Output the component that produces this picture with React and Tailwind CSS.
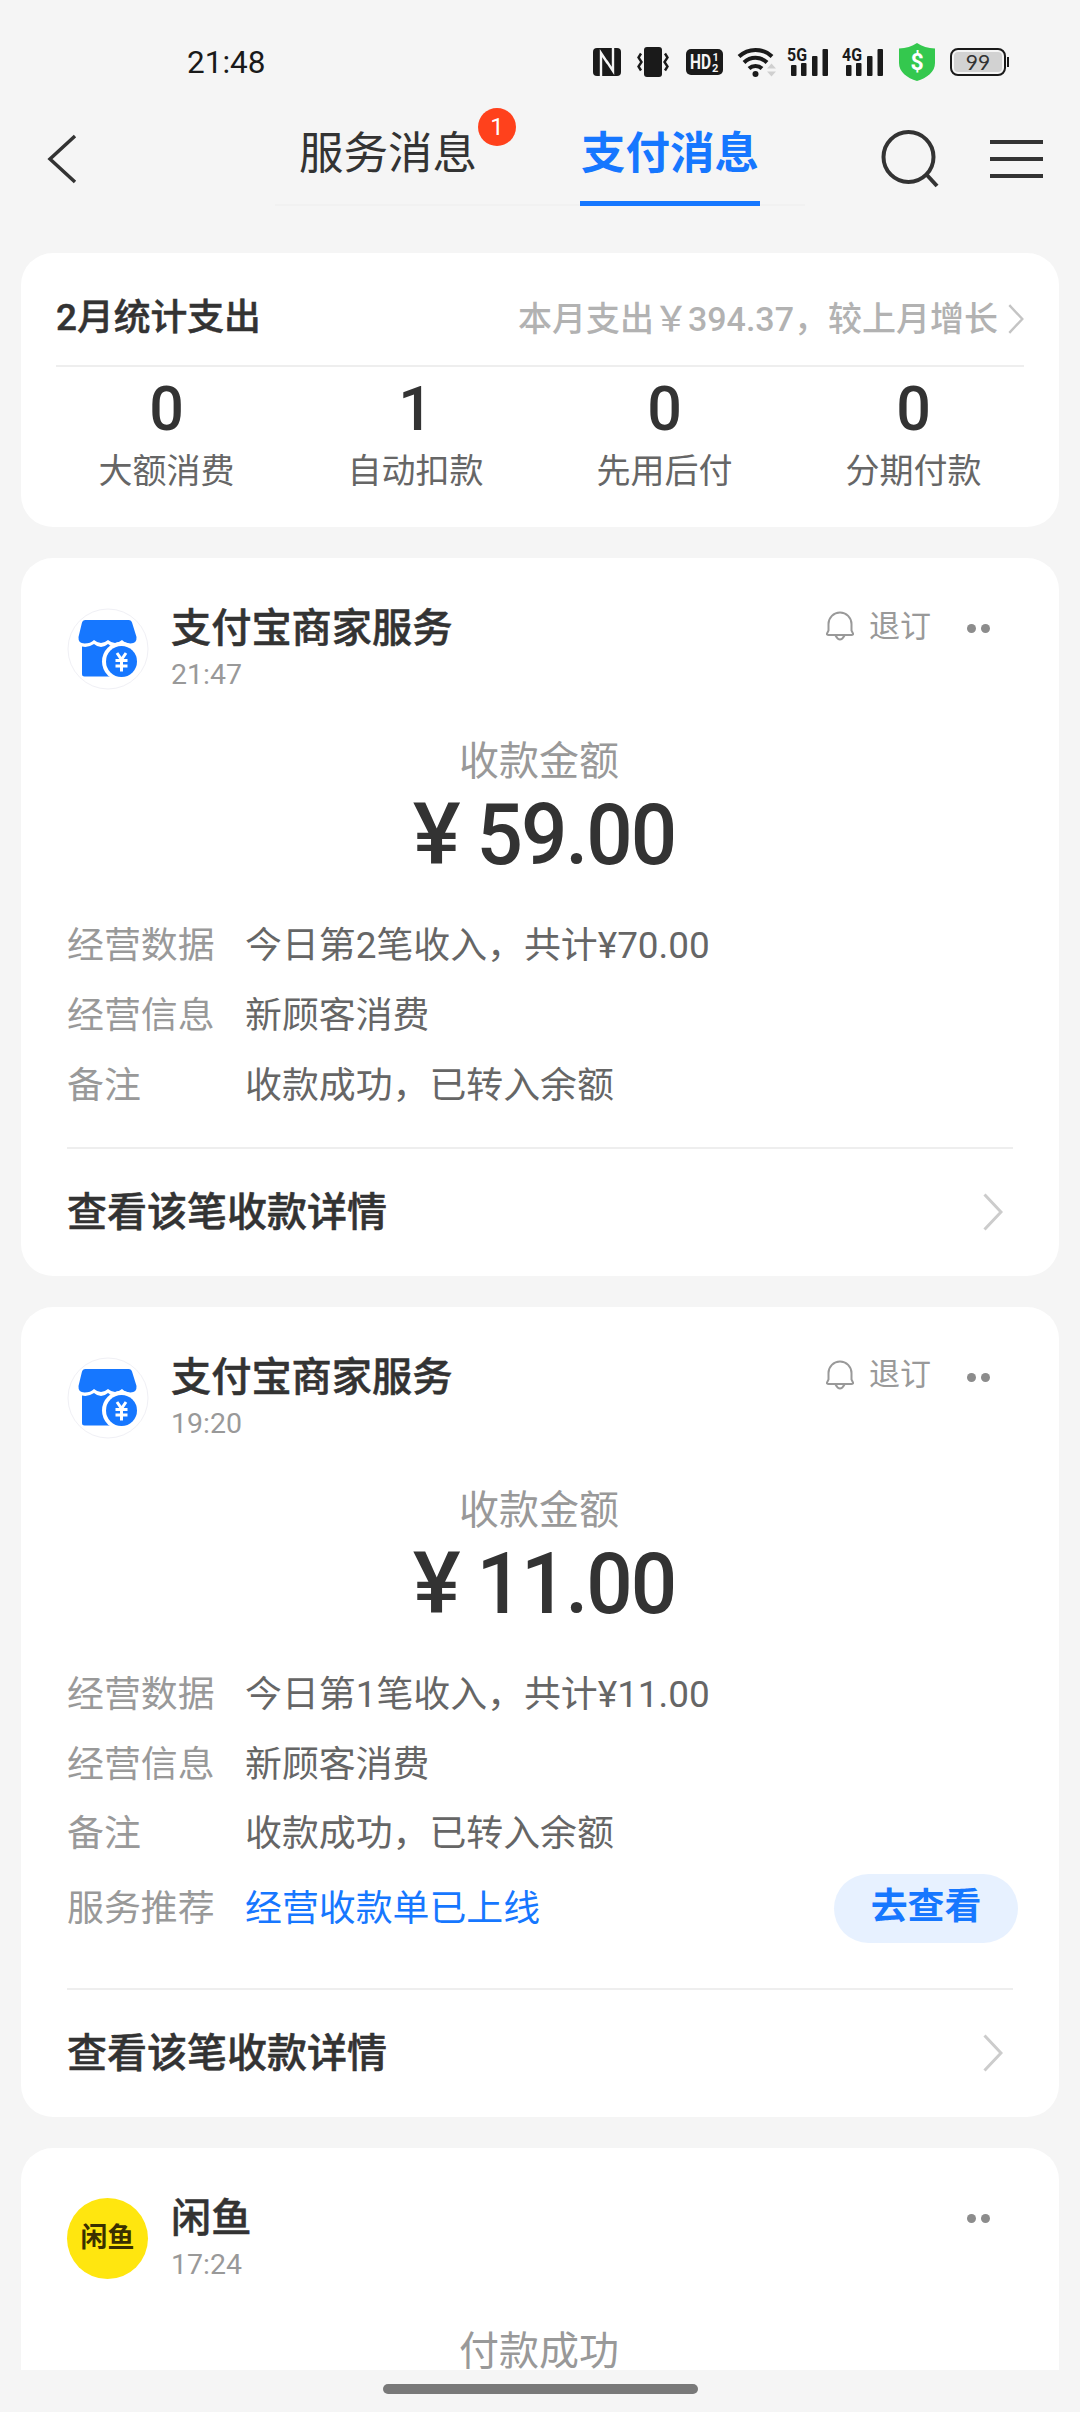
const stats = [
  { value: "0", label: "大额消费" },
  { value: "1", label: "自动扣款" },
  { value: "0", label: "先用后付" },
  { value: "0", label: "分期付款" },
];

const bills = [
  {
    time: "21:47",
    amount: "59.00",
    rows: [
      ["经营数据", "今日第2笔收入，共计¥70.00"],
      ["经营信息", "新顾客消费"],
      ["备注", "收款成功，已转入余额"],
    ],
  },
  {
    time: "19:20",
    amount: "11.00",
    rows: [
      ["经营数据", "今日第1笔收入，共计¥11.00"],
      ["经营信息", "新顾客消费"],
      ["备注", "收款成功，已转入余额"],
    ],
    promo: "经营收款单已上线",
  },
];

const Signal = ({ label }) => (
  <svg width="42" height="40" viewBox="0 -4 42 40" fill="#1a1a1a">
    <rect x="4" y="19" width="5.5" height="11" rx="1" />
    <rect x="14" y="17" width="5.5" height="13" rx="1" />
    <rect x="25" y="10" width="5.5" height="20" rx="1" />
    <rect x="35.5" y="3" width="5.5" height="27" rx="1" />
    <text x="0" y="15" fontSize="19" fontWeight="700" textLength="20" lengthAdjust="spacingAndGlyphs">
      {label}
    </text>
  </svg>
);

const StatusBar = () => (
  <div className="flex h-[124px] items-center pl-[187px] pr-[71px] text-[#1a1a1a]">
    <span className="pt-px text-[31.5px] leading-none">21:48</span>
    <div className="ml-auto flex items-center">
      {/* NFC */}
      <svg width="28" height="28" viewBox="0 0 28 28">
        <rect width="28" height="28" rx="4" fill="#1a1a1a" />
        <path d="M8 28V5l6.500 10M20 0v23l-6.500-10" fill="none" stroke="#f5f5f5" strokeWidth="2.400" />
      </svg>
      {/* vibrate */}
      <svg className="ml-4" width="32" height="30" viewBox="0 0 32 30">
        <rect x="7" y="0" width="18" height="30" rx="3" fill="#1a1a1a" />
        <path d="M4 6.500L1.500 10.500l3 4.500-3 4.500 2.500 4M28 6.500l2.500 4-3 4.500 3 4.500-2.500 4" fill="none" stroke="#1a1a1a" strokeWidth="2.400" />
      </svg>
      <svg className="ml-[17px]" width="37" height="26" viewBox="0 0 37 26">
        <rect width="37" height="26" rx="5" fill="#1a1a1a" />
        <text x="4" y="20" fontSize="20" fontWeight="700" fill="#f5f5f5" textLength="21" lengthAdjust="spacingAndGlyphs">HD</text>
        <text x="26.5" y="12" fontSize="11" fontWeight="700" fill="#f5f5f5">1</text>
        <text x="26" y="23" fontSize="11" fontWeight="700" fill="#f5f5f5">2</text>
      </svg>
      {/* wifi */}
      <svg className="ml-[14px]" width="40" height="32" viewBox="0 0 40 32">
        <g fill="none" stroke="#1a1a1a" strokeWidth="4">
          <path d="M2 10.500a24 24 0 0 1 33 0" />
          <path d="M7 16.500a16.500 16.500 0 0 1 23 0" />
          <path d="M12 22.500a9.500 9.500 0 0 1 13 0" />
        </g>
        <circle cx="18.500" cy="28" r="3" fill="#1a1a1a" />
        <path d="M30 22.500l4.500-5 4.500 5zM30 25.500l4.500 5 4.500-5z" fill="#d0d0d0" />
      </svg>
      <div className="ml-[10px]"><Signal label="5G" /></div>
      <div className="ml-[13px]"><Signal label="4G" /></div>
      <svg className="ml-[15px]" width="36" height="38" viewBox="0 0 36 38">
        <path d="M18 0c5 3.500 11 5 18 5.500V20c0 9-8 15-18 18C8 35 0 29 0 20V5.500C7 5 13 3.500 18 0z" fill="#34c84e" />
        <text x="18" y="26.500" fontSize="23" fontWeight="700" fill="#fff" textAnchor="middle">$</text>
      </svg>
      <svg className="ml-[15px]" width="59" height="28" viewBox="0 0 59 28">
        <rect x="1" y="1" width="54" height="26" rx="7" fill="#f5f5f5" stroke="#1a1a1a" strokeWidth="2" />
        <rect x="4" y="4" width="48" height="20" rx="4" fill="#d2d2d2" />
        <rect x="57" y="9" width="2" height="10" fill="#1a1a1a" />
        <text x="28" y="21.500" fontSize="21" fill="#333" textAnchor="middle" className="font-['Lato']">99</text>
      </svg>
    </div>
  </div>
);

const Header = () => (
  <div className="flex h-[129px] items-start">
    <svg className="ml-[46px] mt-[10px]" width="32" height="50" viewBox="0 0 32 50">
      <path d="M29 2L4 25l25 23" fill="none" stroke="#333" strokeWidth="3.500" />
    </svg>
    <div className="ml-[197px] flex h-[82px] w-[530px] border-b-2 border-[#f1f1f1] pl-6">
      <div className="relative h-[82px] text-[44.5px] leading-[61px] text-[#333]">
        服务消息
        <span className="absolute -top-[16px] left-[179px] flex size-[38px] items-center justify-center rounded-full bg-[#ff411c] text-[24px] leading-none text-white">
          1
        </span>
      </div>
      <div className="ml-[103px] h-[82px] w-[180px] border-b-[5px] border-[#1677ff] text-center text-[44.5px] font-bold leading-[61px] text-[#1677ff]">
        支付消息
      </div>
    </div>
    <svg className="ml-[73px] mt-[5px]" width="62" height="62" viewBox="0 0 62 62">
      <circle cx="30.500" cy="28" r="25" fill="none" stroke="#333" strokeWidth="4" />
      <path d="M48 45l11 12" stroke="#333" strokeWidth="4" />
    </svg>
    <div className="ml-[50px] mt-[16px] flex w-[53px] flex-col gap-[13px]">
      <span className="h-1 bg-[#333]" />
      <span className="h-1 bg-[#333]" />
      <span className="h-1 bg-[#333]" />
    </div>
  </div>
);

const Chevron = ({ className, color }) => (
  <svg className={className} viewBox="0 0 20 38" fill="none" stroke={color} strokeWidth="3">
    <path d="M1.500 1.500L18 19 1.500 36.500" />
  </svg>
);

const StatsCard = () => (
  <div className="h-[274px] shrink-0 rounded-[32px] bg-white px-[35px]">
    <div className="flex h-[114px] items-center justify-between border-b-2 border-[#eee] pt-[19px]">
      <span className="text-[36.8px] font-medium leading-none text-[#333] [-webkit-text-stroke:0.5px]">2月统计支出</span>
      <div className="flex items-center text-[34px] font-medium leading-none text-[#b2b2b2]">
        本月支出￥394.37，较上月增长
        <Chevron className="ml-[10px] h-[30px] w-4" color="#c4c4c4" />
      </div>
    </div>
    <div className="-mx-[14px] grid grid-cols-4 text-center">
      {stats.map((s) => (
        <div key={s.label}>
          <div className="mt-[10px] h-[64px] text-[61px] font-medium leading-[64px] text-[#333]">{s.value}</div>
          <div className="mt-[8px] text-[34px] leading-[44px] text-[#666]">{s.label}</div>
        </div>
      ))}
    </div>
  </div>
);

const ShopAvatar = () => (
  <svg className="mt-px" width="82" height="82" viewBox="0 0 82 82">
    <circle cx="41" cy="41" r="40" fill="#fff" stroke="#f0f0f5" />
    <path
      d="M18 12h44q2.500 0 3 2.500L69.500 29Q70 35.500 63.500 35.500 58.500 35.500 55 32 48 38 41 32 34 38 27 32 23.500 35.500 17.500 35.500 11 35.500 11.500 29L15 14.500Q15.500 12 18 12z"
      fill="#1677ff"
    />
    <path d="M15 38.500Q21 40 27 36 34 42 41 36 48 42 55 36V68.500H17.500Q15 68.500 15 66z" fill="#1677ff" />
    <circle cx="54.500" cy="53.500" r="19.500" fill="#fff" />
    <circle cx="54.500" cy="53.500" r="15.500" fill="#1677ff" />
    <path d="M50 45l4.500 6.500L59 45M54.500 51v12.500M48.500 52.500h12M48.500 58h12" fill="none" stroke="#fff" strokeWidth="3" />
  </svg>
);

const FishAvatar = () => (
  <div className="mr-px mt-px flex size-[81px] items-center justify-center rounded-full bg-[#ffe60f] text-[27px] font-bold leading-none text-[#3a3000]">
    闲鱼
  </div>
);

const Bell = () => (
  <svg width="28" height="30" viewBox="0 0 28 30" fill="none" stroke="#999" strokeWidth="2">
    <path d="M2.500 13a11.500 11.500 0 0 1 23 0v6.500l1.500 3q.3 1.500-1.500 1.500h-23q-1.800 0-1.500-1.500l1.500-3z" />
    <path d="M9.500 24.500q4.500 8 9 0" />
  </svg>
);

const CardHeader = ({ avatar, title, time, canUnsubscribe }) => (
  <div className="flex h-[160px] pl-[46px] pr-[69px] pt-[49px]">
    {avatar}
    <div className="ml-[22px]">
      <div className="-mt-px h-[46px] text-[40.2px] font-medium leading-[46px] text-[#333] [-webkit-text-stroke:0.5px]">
        {title}
      </div>
      <div className="mt-[6px] text-[28.5px] leading-[34px] text-[#999]">{time}</div>
    </div>
    <div className="ml-auto flex h-10 items-center text-[31px] leading-none text-[#999]">
      {canUnsubscribe && (
        <div className="flex items-center pb-[2px]">
          <Bell />
          <span className="ml-[15px]">退订</span>
        </div>
      )}
      <span className="ml-9 mt-[3px] flex gap-[5px]">
        <i className="size-[9px] rounded-full bg-[#8c8c8c]" />
        <i className="size-[9px] rounded-full bg-[#8c8c8c]" />
      </span>
    </div>
  </div>
);

const BillCard = ({ time, amount, rows, promo }) => (
  <div className="shrink-0 rounded-[32px] bg-white">
    <CardHeader avatar={<ShopAvatar />} title="支付宝商家服务" time={time} canUnsubscribe />
    <div className="mt-5 pr-[2px] text-center text-[40px] leading-[48px] text-[#999]">收款金额</div>
    <div className="mt-[6px] flex h-[86px] justify-center pl-[10px] text-[86px] font-medium leading-[86px] tracking-[-2px] text-[#333]">
      <span className="mr-[7px] origin-right scale-x-[1.05]">¥</span>
      <span className="origin-right scale-x-[0.95]">{amount}</span>
    </div>
    <div className="mt-[34px] px-[46px] text-[36.9px]">
      {rows.map(([label, value]) => (
        <div key={label} className="flex h-[69.6px] items-center leading-none">
          <span className="w-[178px] text-[#999]">{label}</span>
          <span className="text-[#666]">{value}</span>
        </div>
      ))}
      {promo && (
        <div className="-mr-[5px] flex h-[92px] items-start pt-[4px] leading-none">
          <span className="flex h-[72px] w-[178px] items-center text-[#999]">服务推荐</span>
          <span className="flex h-[72px] items-center text-[#1677ff]">{promo}</span>
          <button className="ml-auto h-[69px] w-[184px] rounded-full bg-[#e7f1ff] pb-[2px] font-bold text-[#1677ff]">
            去查看
          </button>
        </div>
      )}
    </div>
    <div className="mx-[46px] mt-[26px] flex h-[129px] items-center justify-between border-t-2 border-[#eee] pr-[10px]">
      <span className="pt-[2px] text-[40px] font-medium leading-none text-[#333] [-webkit-text-stroke:0.5px]">查看该笔收款详情</span>
      <Chevron className="h-[38px] w-5" color="#ccc" />
    </div>
  </div>
);

const App = () => {
  return (
    <div className="h-[2412px] w-[1080px] overflow-hidden bg-[#f5f5f5] font-['Roboto','Noto_Sans_CJK_SC',sans-serif]">
      <StatusBar />
      <Header />
      <div className="flex h-[2117px] flex-col gap-[31px] overflow-hidden px-[21px]">
        <StatsCard />
        {bills.map((bill) => (
          <BillCard key={bill.time} {...bill} />
        ))}
        <div className="h-[400px] shrink-0 rounded-t-[32px] bg-white">
          <CardHeader avatar={<FishAvatar />} title="闲鱼" time="17:24" />
          <div className="mt-5 pr-[2px] text-center text-[40px] leading-[48px] text-[#999]">付款成功</div>
        </div>
      </div>
      <div className="mx-auto mt-[14px] h-[10px] w-[315px] rounded-full bg-[#797979]" />
    </div>
  );
};

export default App;
